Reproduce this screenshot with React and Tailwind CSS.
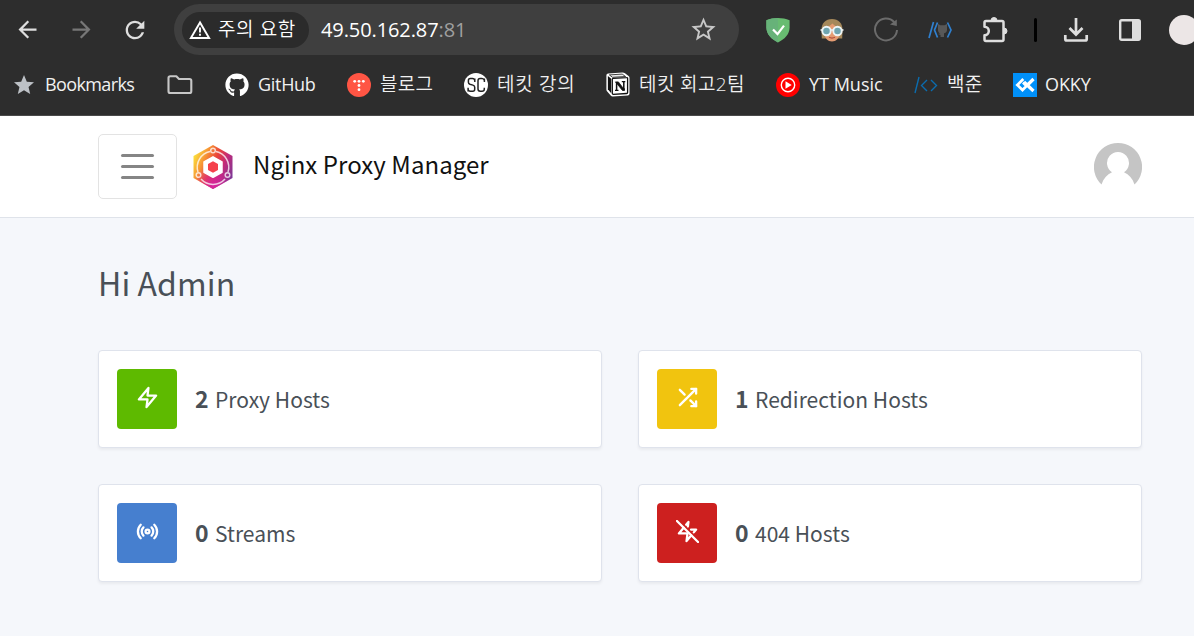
import { MdArrowBack, MdArrowForward, MdRefresh, MdStar, MdStarBorder } from "react-icons/md";
import { FaGithub } from "react-icons/fa";
import { FiZap, FiShuffle, FiRadio, FiZapOff } from "react-icons/fi";

function WarningIcon() {
  return (
    <svg width="22" height="20" viewBox="0 0 22 20" fill="none">
      <path d="M11 2.400 1.900 18h18.200z" stroke="#fff" strokeWidth="1.900" />
      <path d="M11 7.600v4.800M11 13.800v2" stroke="#fff" strokeWidth="1.900" />
    </svg>
  );
}

function ShieldIcon() {
  return (
    <svg width="24" height="26" viewBox="0 0 24 26">
      <path d="M12 1C8 1 4 1.800.4 3.200v7.300c0 6.500 4.600 11.400 11.600 15 7-3.600 11.600-8.500 11.600-15V3.200C20 1.800 16 1 12 1z" fill="#68bc71" />
      <path d="M12 1C8 1 4 1.800.4 3.200v7.300c0 6.500 4.600 11.400 11.600 15z" fill="#67b279" />
      <path d="M7 12.500l4.500 4.600L18 8.600" fill="none" stroke="#fff" strokeWidth="2.200" />
    </svg>
  );
}

function FaceIcon() {
  return (
    <svg width="24" height="24" viewBox="0 0 24 24">
      <path d="M1.500 12C1.500 5 5.500 1 12 1s10.500 4 10.500 11l-.3 8.500h-4.200h-12H1.800z" fill="#a5885a" />
      <path d="M4.500 10c3.500-1 5.500-2.300 8-4.500 2 2.500 4 3.500 7 4.500v5.500c0 4.500-3.500 8-7.500 8s-7.500-3.500-7.500-8z" fill="#e59c72" />
      <path d="M9 19.300q3 1.500 6 0" stroke="#b5503c" strokeWidth="1.200" fill="none" />
      <path d="M.5 12h23" stroke="#e8eef0" strokeWidth="1.600" />
      <circle cx="6.500" cy="13" r="4.200" fill="#6fa5b0" stroke="#eef5f6" strokeWidth="1.900" />
      <circle cx="17.500" cy="13" r="4.200" fill="#6fa5b0" stroke="#eef5f6" strokeWidth="1.900" />
    </svg>
  );
}

function CircleArrowIcon() {
  return (
    <svg width="26" height="26" viewBox="0 0 26 26">
      <path d="M21.300 5.200A11 11 0 1 0 24 13" fill="none" stroke="#6b6b6b" strokeWidth="2" />
      <path d="M23.800 2.500v6.500L17 7.500z" fill="#6b6b6b" />
    </svg>
  );
}

function CodeCatIcon() {
  return (
    <svg width="24" height="18" viewBox="0 0 24 18" fill="none">
      <g stroke="#2f80d0" strokeWidth="1.700">
        <path d="M5.500 1 1 17M9.500 1.500 6.500 9l3 7.500M19.500 1.500 23 9l-3.500 7.500" />
      </g>
      <path d="M10 3l2.500 1.300h4L19 3v6c0 2-1.500 3-3 3.300V16h-3.500v-2l-2.500-1 2.300-.7C11 12 10 11 10 9z" fill="#585858" />
    </svg>
  );
}

function PuzzleIcon() {
  return (
    <svg width="28" height="28" viewBox="0 0 28 28">
      <path d="M3.500 6.500q0-1.500 1.500-1.500H21q1.500 0 1.500 1.500v17q0 1.500-1.500 1.500H5q-1.500 0-1.500-1.500V19.300a4.300 4.300 0 0 0 0-8.600z" fill="none" stroke="#dedede" strokeWidth="2.500" strokeLinejoin="round" />
      <path d="M10 4.500a3 3 0 0 1 6 0zM23 12a3 3 0 0 1 0 6z" fill="#dedede" stroke="#dedede" />
    </svg>
  );
}

function DownloadIcon() {
  return (
    <svg width="26" height="26" viewBox="0 0 26 26" fill="none" stroke="#dedede" strokeWidth="2.700">
      <path d="M13 1v16M6.500 11l6.500 6.500 6.500-6.500M2.300 18v4q0 1.500 1.500 1.500h18.400q1.500 0 1.500-1.500V18" />
    </svg>
  );
}

function SidePanelIcon() {
  return (
    <svg width="24" height="24" viewBox="0 0 24 24">
      <rect x="2.200" y="2.200" width="19.600" height="19.600" rx="1.500" fill="none" stroke="#dedede" strokeWidth="2.400" />
      <path d="M14 2h8v20h-8z" fill="#dedede" />
    </svg>
  );
}

function FolderIcon() {
  return (
    <svg width="26" height="20" viewBox="0 0 26 20" fill="none">
      <path d="M1.500 3q0-1.800 1.800-1.800h6L12 4h10.500q1.800 0 1.800 1.800v10.400q0 1.800-1.800 1.800H3.300q-1.800 0-1.800-1.800z" stroke="#c7c7c7" strokeWidth="2.100" strokeLinejoin="round" />
    </svg>
  );
}

function BlogIcon() {
  return (
    <svg width="24" height="24" viewBox="0 0 24 24">
      <circle cx="12" cy="12" r="12" fill="#ff5544" />
      <g fill="#fff">
        <circle cx="7.700" cy="8.300" r="1.400" />
        <circle cx="12" cy="8.300" r="1.400" />
        <circle cx="16.300" cy="8.300" r="1.400" />
        <circle cx="12" cy="12.500" r="1.400" />
        <circle cx="12" cy="16.700" r="1.400" />
      </g>
    </svg>
  );
}

function ScIcon() {
  return (
    <svg width="24" height="24" viewBox="0 0 24 24" fill="none">
      <circle cx="12" cy="12" r="12" fill="#fff" />
      <g stroke="#222" strokeWidth="1.500">
        <path d="M10.800 9V5.500M10.700 7.500Q10.500 5.600 8.500 5.600H6.200Q4.400 5.600 4.400 7.500v1.800q0 1.500 1.500 2l3 .8q1.800.5 1.800 2.200v2q0 2-1.900 2H6.400Q4.300 18.300 4.200 16.500M4.100 14.800v3.700" />
        <path d="M20.400 9V5.500M20.300 7.500Q20 5.600 18 5.600h-1.800q-2.200 0-2.200 2.200v8.300q0 2.200 2.200 2.200H18q2.200 0 2.300-2v-1.600" />
      </g>
    </svg>
  );
}

function NotionIcon() {
  return (
    <svg width="24" height="25" viewBox="0 0 24 25">
      <path d="M2.200 1.500 16.500.500q1.500 0 2.500.8l3.600 2.600q.9.600.9 1.800v16q0 1.700-1.800 1.800l-15 .9q-1.200 0-2-1L1 19.300Q.4 18.500.4 17.500V3.300q0-1.600 1.800-1.800z" fill="#fff" />
      <path d="M3.400 2.900 16.200 2.100l3.400 2.400L6.500 5.300z" fill="#eee" stroke="#111" strokeWidth=".8" />
      <path d="M1.900 4.100l3.300 2.700v14.500L1.900 17.300z" fill="#111" />
      <path d="M6.300 7.300q0-.9.900-1L20.600 5.600q1-.1 1 .9v14q0 1-1 1L7.300 22.300q-1 0-1-1z" fill="#fff" stroke="#111" strokeWidth="1.300" />
      <path d="M10.600 18.500V10.500M17.800 17.500V9.800" stroke="#111" strokeWidth="1.500" />
      <path d="M9.400 9.900h3l5.200 6.800h.9v1.800h-2L10.800 11.500z" fill="#111" stroke="#111" strokeWidth=".8" />
      <path d="M9 18.400h3.500M15.800 9.600h3.500" stroke="#111" strokeWidth="1.200" />
    </svg>
  );
}

function YtMusicIcon() {
  return (
    <svg width="24" height="24" viewBox="0 0 24 24">
      <circle cx="12" cy="12" r="12" fill="#f00" />
      <circle cx="12" cy="12" r="6.700" fill="none" stroke="#fff" strokeWidth="1.400" />
      <path d="M9.500 8.300v7.400L15.700 12z" fill="#fff" />
    </svg>
  );
}

function BaekjoonIcon() {
  return (
    <svg width="24" height="18" viewBox="0 0 24 18" fill="none" stroke="#0b6cae" strokeWidth="1.400">
      <path d="M5 1 1 17M13 4 7.500 9.500 13 15M17 4l5.500 5.500L17 15" />
    </svg>
  );
}

function OkkyIcon() {
  return (
    <svg width="24" height="24" viewBox="0 0 24 24" fill="none">
      <path d="M0 0h24v24H0z" fill="#0090f9" />
      <path d="M10.300 6 4.300 12l5.200 5 4-4-3.500-3.500" stroke="#fff" strokeWidth="2.700" />
      <path d="M20.500 6 14.500 12M11 9l9.500 9" stroke="#fff" strokeWidth="3.200" />
    </svg>
  );
}

function NpmLogo() {
  return (
    <svg width="42" height="46" viewBox="0 0 42 46">
      <defs>
        <linearGradient id="hex" x1="0" y1="0.200" x2="1" y2="0.700">
          <stop offset="0" stopColor="#fbe93c" />
          <stop offset="0.250" stopColor="#f79a35" />
          <stop offset="0.500" stopColor="#ea4438" />
          <stop offset="0.720" stopColor="#c42a78" />
          <stop offset="1" stopColor="#7d3796" />
        </linearGradient>
        <radialGradient id="glow" cx="0.500" cy="0.950" r="0.500">
          <stop offset="0" stopColor="#d6249f" />
          <stop offset="1" stopColor="#d6249f" stopOpacity="0" />
        </radialGradient>
      </defs>
      <path d="M21 1 40.500 12v22L21 45 1.500 34V12z" fill="url(#hex)" />
      <path d="M21 1 40.500 12v22L21 45 1.500 34V12z" fill="url(#glow)" />
      <g fill="none" stroke="#fff" strokeOpacity="0.750" strokeWidth="1.500">
        <path d="M24 7.500A16 16 0 0 1 36 28M33 35a16 16 0 0 1-24 0M6 28A16 16 0 0 1 18 7.500" />
        <circle cx="21" cy="6.500" r="2.300" />
        <circle cx="35.500" cy="31" r="2.300" />
        <circle cx="6.500" cy="31" r="2.300" />
      </g>
      <path d="M21 12.800 30 17.800v10.500L21 33.300l-9-5V17.800z" fill="#fff" stroke="#fff" strokeWidth="1.500" strokeLinejoin="round" />
      <path d="M21 17.200 26 20v6L21 28.800l-5-2.800v-6z" fill="#f5414b" />
    </svg>
  );
}

function UserAvatar() {
  return (
    <svg width="48" height="48" viewBox="0 0 48 48">
      <path d="M24 0a24 24 0 0 1 16.500 41.500C38.500 35.500 35 31.500 30 29.300a11 11 0 1 0-12 0c-5 2.200-8.500 6.200-10.500 12.200A24 24 0 0 1 24 0z" fill="#c5c5c5" />
    </svg>
  );
}

const extensions = [
  ["shield", ShieldIcon, ""],
  ["face", FaceIcon, ""],
  ["circle", CircleArrowIcon, ""],
  ["cat", CodeCatIcon, ""],
  ["puzzle", PuzzleIcon, "pl-[2px]"],
];

const bookmarks = [
  { icon: () => <MdStar size={24} color="#bdc1c6" />, label: "Bookmarks", box: "w-[155px]", text: "tracking-[-0.62px]" },
  { icon: FolderIcon, label: "", box: "w-[58px]", text: "" },
  { icon: () => <FaGithub size={24} color="#fff" />, label: "GitHub", box: "w-[122px]", text: "tracking-[-0.3px]" },
  { icon: BlogIcon, label: "블로그", box: "w-[117px]", text: "font-[350] text-[19px] tracking-[0.3px]" },
  { icon: ScIcon, label: "테킷 강의", box: "w-[142px]", text: "font-[350] text-[19px] tracking-[0.7px]" },
  { icon: NotionIcon, label: "테킷 회고2팀", box: "w-[170px]", text: "font-[350] text-[19px] tracking-[0.4px]" },
  { icon: YtMusicIcon, label: "YT Music", box: "w-[138px]", text: "" },
  { icon: BaekjoonIcon, label: "백준", box: "w-[99px]", text: "font-[350] text-[19px] tracking-[0.2px]" },
  { icon: OkkyIcon, label: "OKKY", box: "w-[90px]", text: "-ml-px tracking-[-0.1px]" },
];

const stats = [
  { icon: FiZap, count: 2, label: "Proxy Hosts", bg: "bg-[#5eba00]" },
  { icon: FiShuffle, count: 1, label: "Redirection Hosts", bg: "bg-[#f1c40f]" },
  { icon: FiRadio, count: 0, label: "Streams", bg: "bg-[#467fcf]" },
  { icon: FiZapOff, count: 0, label: "404 Hosts", bg: "bg-[#cd201f]" },
];

function Toolbar() {
  return (
    <div className="flex h-[59px] items-center overflow-hidden">
      <div className="flex w-[174px] shrink-0">
        <div className="flex w-[54px] justify-center"><MdArrowBack size={27} color="#dedede" /></div>
        <div className="flex w-[54px] justify-center"><MdArrowForward size={27} color="#777" /></div>
        <div className="flex w-[54px] justify-center"><MdRefresh size={28} color="#dedede" /></div>
      </div>
      <div className="flex h-[51px] w-[565px] shrink-0 items-center rounded-full bg-[#3f3f3f] pl-2 pr-[21px]">
        <div className="flex h-9 w-[127px] items-center gap-[7px] rounded-full bg-[#2b2b2b] pl-[7px] whitespace-nowrap text-[19px] font-[350] text-white">
          <WarningIcon />
          <span className="pb-px tracking-[0.6px]">주의 요함</span>
        </div>
        <div className="ml-3 flex-1 whitespace-nowrap text-[20px] tracking-[-0.1px] text-white">
          49.50.162.87<span className="text-[#a0a0a0]">:81</span>
        </div>
        <MdStarBorder size={29} color="#c7c7c7" />
      </div>
      <div className="ml-3 flex shrink-0 items-center">
        {extensions.map(([name, Icon, offset]) => (
          <div key={name} className={`flex w-[54px] justify-center ${offset}`}><Icon /></div>
        ))}
        <div className="ml-[13px] h-6 w-[3px] rounded bg-black" />
        <div className="ml-[11px] flex w-[54px] justify-center pl-[2px]"><DownloadIcon /></div>
        <div className="flex w-[54px] justify-center pl-[2px]"><SidePanelIcon /></div>
        <div className="ml-[13px] size-[30px] rounded-full bg-[#ece6e6]" />
      </div>
    </div>
  );
}

function BookmarkBar() {
  return (
    <div className="flex h-[51px] items-center pl-3 text-[18px] text-[#f1f1f1]">
      {bookmarks.map(({ icon: Icon, label, box, text }) => (
        <div key={label} className={`flex shrink-0 items-center gap-[9px] whitespace-nowrap ${box}`}>
          <Icon />
          <span className={text}>{label}</span>
        </div>
      ))}
    </div>
  );
}

function PageHeader() {
  return (
    <header className="flex h-[102px] items-center border-b border-[#dfe3ea] bg-white pl-[98px] pr-[52px]">
      <button className="flex h-[65px] w-[79px] flex-col items-center justify-center gap-2 rounded-[5px] border border-[#e3e3e3]">
        <span className="h-[3px] w-[33px] rounded-full bg-[#858585]" />
        <span className="h-[3px] w-[33px] rounded-full bg-[#858585]" />
        <span className="h-[3px] w-[33px] rounded-full bg-[#858585]" />
      </button>
      <div className="ml-[15px]"><NpmLogo /></div>
      <span className="ml-[19px] flex-1 pb-[6px] text-[24px] tracking-[0.06px] text-[#111]">Nginx Proxy Manager</span>
      <UserAvatar />
    </header>
  );
}

function StatCard({ icon: Icon, count, label, bg }) {
  return (
    <div className="flex h-[98px] items-center rounded-[4px] border border-[#dfe3ec] bg-white px-[18px] shadow-[0_2px_3px_rgba(0,0,0,0.05)]">
      <div className={`flex size-[60px] items-center justify-center rounded-[4px] pb-[3px] ${bg}`}>
        <Icon size={23} color="#fff" strokeWidth={2.4} />
      </div>
      <div className="ml-[18px] flex items-baseline gap-[6px] whitespace-nowrap pt-px text-[21px] tracking-[0.03px] text-[#495057]">
        <b className="w-[14px] text-[23px] leading-[30px]">{count}</b>
        <span>{label}</span>
      </div>
    </div>
  );
}

export default function App() {
  return (
    <div className="flex h-[636px] w-[1194px] flex-col overflow-hidden bg-[#f5f7fb] font-['Noto_Sans_CJK_KR',sans-serif]">
      <div className="h-[116px] shrink-0 border-b border-[#4a4a4a] bg-[#2d2d2d] font-['Open_Sans','Noto_Sans_CJK_KR',sans-serif]">
        <Toolbar />
        <BookmarkBar />
      </div>
      <PageHeader />
      <main className="pl-[98px] pr-[52px] pt-[43px]">
        <h1 className="h-[89px] text-[32px] leading-[42px] tracking-[0.1px] text-[#495057]">Hi Admin</h1>
        <div className="grid grid-cols-2 gap-9">
          {stats.map((s) => <StatCard key={s.label} {...s} />)}
        </div>
      </main>
    </div>
  );
}
